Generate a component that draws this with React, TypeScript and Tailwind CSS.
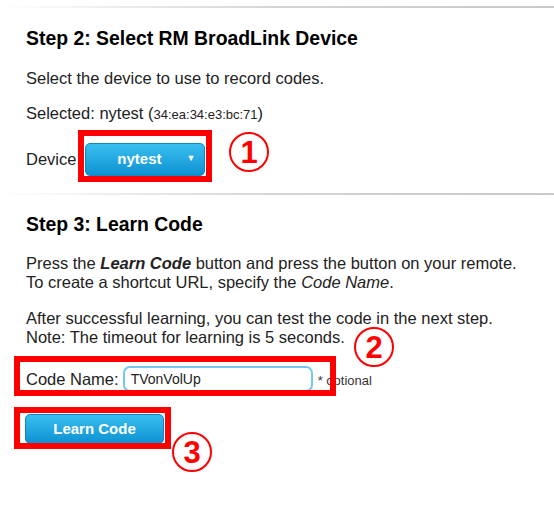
import React from "react";

function Circle({ n, cls }: { n: string; cls: string }) {
  return (
    <div
      className={`absolute flex items-center justify-center rounded-full border-2 border-[#ff0000] text-[#ff0000] font-bold text-[31px] leading-none ${cls}`}
    >
      <span className="mt-[1px]">{n}</span>
    </div>
  );
}

function Sep() {
  return <div className="h-[2px] w-full bg-gradient-to-r from-[#ffffff] via-[#d4d4d4] to-[#c8c8c8]" />;
}

export default function App() {
  return (
    <div
      className="relative w-[554px] h-[506px] overflow-hidden bg-white text-[#222]"
      style={{ fontFamily: '"Liberation Sans", Arial, sans-serif' }}
    >
      <div className="pt-[6px]">
        <Sep />
        <div className="px-[26px]">
          <h2 className="mt-[19px] text-[19.4px] font-bold leading-[22px] text-black">
            Step 2: Select RM BroadLink Device
          </h2>
          <p className="mt-[20px] text-[16.5px] leading-[19px]">Select the device to use to record codes.</p>
          <p className="mt-[16px] text-[16.5px] leading-[19px]">
            Selected: nytest (<span className="text-[13px]">34:ea:34:e3:bc:71</span>)
          </p>
          <div className="mt-[19px] flex h-[33px] items-center">
            <span className="text-[16.5px] leading-[19px]">Device</span>
            <button className="relative ml-[9px] h-[33px] w-[120px] rounded-[5px] border border-[#0b8bc6] bg-gradient-to-b from-[#38bff0] to-[#0a92d2] text-white">
              <span className="absolute left-0 right-[12px] top-0 bottom-0 flex items-center justify-center text-[15px] font-bold">
                nytest
              </span>
              <span className="absolute right-[9px] top-[8px] text-[9px]">▼</span>
            </button>
          </div>
        </div>
        <div className="mt-[17px]">
          <Sep />
        </div>
        <div className="px-[26px]">
          <h2 className="mt-[18px] text-[19.4px] font-bold leading-[22px] text-black">Step 3: Learn Code</h2>
          <p className="mt-[19px] text-[16.5px] leading-[19px]">
            Press the <b><i>Learn Code</i></b> button and press the button on your remote.
            <br />
            To create a shortcut URL, specify the <i>Code Name</i>.
          </p>
          <p className="mt-[17px] text-[16.5px] leading-[19px]">
            After successful learning, you can test the code in the next step.
            <br />
            Note: The timeout for learning is 5 seconds.
          </p>
          <div className="mt-[19px] flex h-[26px] items-center">
            <span className="text-[16.5px] leading-[19px]">Code Name:</span>
            <div className="ml-[4px] flex h-[26px] w-[190px] items-center rounded-[7px] border-2 border-[#74c8ef] bg-white pl-[6px] text-[14px] text-[#222]">
              TVonVolUp
            </div>
            <span className="ml-[5px] mt-[3px] text-[13px] text-[#333]">* optional</span>
          </div>
          <button className="-ml-px mt-[22px] flex h-[30px] w-[139px] items-center justify-center rounded-[5px] border border-[#0b8bc6] bg-gradient-to-b from-[#38bff0] to-[#0a92d2] text-[15px] font-bold text-white">
            Learn Code
          </button>
        </div>
      </div>

      {/* annotations */}
      <div className="absolute left-[78px] top-[130px] h-[52px] w-[134px] border-[6px] border-[#ff0000]" />
      <div className="absolute left-[14px] top-[356px] h-[40px] w-[322px] border-[6px] border-[#ff0000]" />
      <div className="absolute left-[14px] top-[407px] h-[42px] w-[157px] border-[6px] border-[#ff0000]" />
      <Circle n="1" cls="left-[229px] top-[132px] h-[40px] w-[40px]" />
      <Circle n="2" cls="left-[354px] top-[327px] h-[40px] w-[40px]" />
      <Circle n="3" cls="left-[172px] top-[432px] h-[40px] w-[40px]" />
    </div>
  );
}
